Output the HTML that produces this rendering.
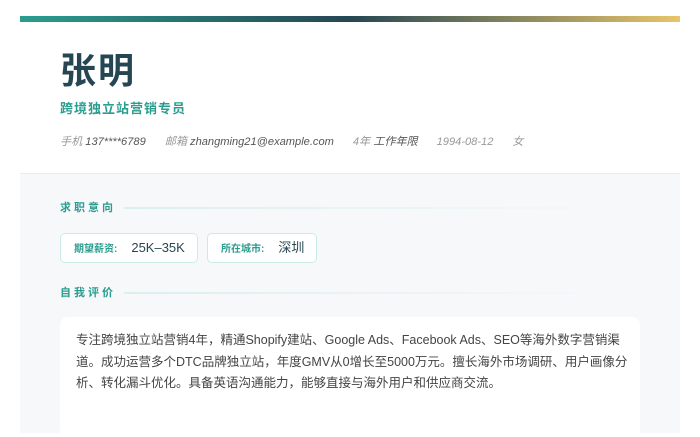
<!DOCTYPE html>
<html><head><meta charset="utf-8"><style>
*{margin:0;padding:0;box-sizing:border-box}
body{width:700px;height:400px;overflow:hidden;background:#fff;font-family:"Liberation Sans","Noto Sans CJK SC",sans-serif;position:relative}
.card{position:absolute;left:20px;top:16px;width:660px;height:400px;background:#fff}
.bar{height:6px;background:linear-gradient(90deg,#2a9d8f 0%,#264653 50%,#e9c46a 100%)}
.name{position:absolute;left:40px;top:33px;font-size:36px;font-weight:bold;color:#264653;letter-spacing:2px;line-height:44px}
.title{position:absolute;left:40px;top:82px;font-size:13px;font-weight:bold;color:#2a9d8f;letter-spacing:1px}
.meta{position:absolute;left:40px;top:117px;font-size:11.1px;font-style:italic;color:#999;white-space:nowrap}
.meta b{font-weight:normal;color:#555;}
.meta span{margin-right:19px}
.gray{position:absolute;left:0;top:157px;width:660px;height:260px;background:#f6f8fa;border-top:1px solid #e8ecef}
.sh{position:absolute;left:40px;font-size:11px;font-weight:bold;color:#2a9d8f;letter-spacing:3px;}
.ln{position:absolute;left:104px;width:480px;height:2px;background:linear-gradient(90deg,#dcefec,rgba(220,239,236,0))}
.tag{position:absolute;top:59px;height:30px;background:#fff;border:1px solid #cdebe6;border-radius:5px;font-size:13px;color:#264653;line-height:28px;padding-left:13px}
.tag i{font-style:normal;font-size:10px;font-weight:bold;color:#2a9d8f;margin-right:14px}
.txt{position:absolute;left:40px;top:143px;width:580px;height:120px;background:#fff;border-radius:8px;padding:13px 10px 13px 16px;font-size:12.5px;line-height:21.5px;color:#444}
</style></head><body>
<div class="card">
<div class="bar"></div>
<div class="name">张明</div>
<div class="title">跨境独立站营销专员</div>
<div class="meta"><span>手机 <b>137****6789</b></span><span>邮箱 <b>zhangming21@example.com</b></span><span>4年 <b>工作年限</b></span><span>1994-08-12</span><span>女</span></div>
<div class="gray">
<div class="sh" style="top:25px">求职意向</div><div class="ln" style="top:33px"></div>
<div class="tag" style="left:40px;width:138px"><i>期望薪资:</i>25K–35K</div>
<div class="tag" style="left:187px;width:110px"><i>所在城市:</i>深圳</div>
<div class="sh" style="top:110px">自我评价</div><div class="ln" style="top:118px"></div>
<div class="txt">专注跨境独立站营销4年，精通Shopify建站、Google Ads、Facebook Ads、SEO等海外数字营销渠道。成功运营多个DTC品牌独立站，年度GMV从0增长至5000万元。擅长海外市场调研、用户画像分析、转化漏斗优化。具备英语沟通能力，能够直接与海外用户和供应商交流。</div>
</div>
</div>
</body></html>
